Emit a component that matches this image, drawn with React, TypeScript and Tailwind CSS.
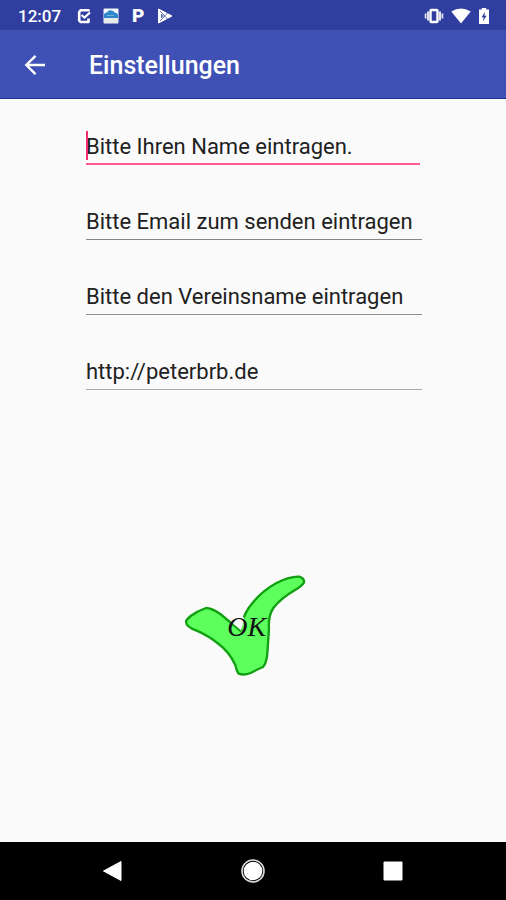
import { useState } from 'react'

const fields = [
  { id: 'name', label: 'Name', value: 'Bitte Ihren Name eintragen.', line: 'border-b-2 border-[#ff5c8d] mr-[2px]' },
  { id: 'email', label: 'Email', value: 'Bitte Email zum senden eintragen', line: 'border-b border-[#858585]' },
  { id: 'verein', label: 'Vereinsname', value: 'Bitte den Vereinsname eintragen', line: 'border-b border-[#8f8f8f]' },
  { id: 'url', label: 'Webseite', value: 'http://peterbrb.de', line: 'border-b border-[#a8a8a8]' },
]

function StatusBar() {
  return (
    <div className="h-[30px] bg-[#303f9f] flex items-center justify-between pt-[2px] pl-[18px] pr-4 text-white">
      <div className="flex items-center">
        <span className="text-[17px] font-medium leading-none">12:07</span>
        <div className="flex items-center gap-[11px] ml-[15px]">
          {/* Task */}
          <svg className="w-4 h-4" viewBox="0 0 16 16" fill="none" stroke="#fff" strokeWidth="2.6">
            <path d="M12.5 3.5V2.2H4.8L3.2 4V12.5L4.5 14H12.5V10.5" strokeLinejoin="round" />
            <path d="M5.5 7L8.5 9.5L14 4.5" strokeWidth="2.2" />
          </svg>
          {/* Cloud picture */}
          <svg className="w-4 h-4" viewBox="0 0 16 16">
            <rect x="0.5" y="0.5" width="15" height="15" rx="1" fill="#f4f8fb" />
            <path d="M1 10V6.5Q1.5 4.5 4 4.5Q5.5 1.8 8.5 2.5Q11 3 11.5 4.5Q15 5 15 7.5V10Z" fill="#2d86c9" />
            <path d="M4 7.5H11" stroke="#6db6e0" />
            <rect x="1" y="10" width="14" height="5" fill="#e8eaea" />
          </svg>
          <span className="w-4 text-center text-[19px] leading-6 font-black">P</span>
          {/* Play */}
          <svg className="w-4 h-4" viewBox="0 0 16 16">
            <path d="M1.5 1L15 8L1.5 15Z" fill="#fff" stroke="#fff" strokeLinejoin="round" />
            <path d="M3 3L10.5 11M3 13L10.5 5" stroke="#303f9f" strokeWidth="0.7" />
            <path d="M4 5.5L7 8L4 10.5Z" fill="#6874b9" />
          </svg>
        </div>
      </div>
      <div className="flex items-center gap-[7px]">
        {/* Vibrate */}
        <svg className="w-5 h-4" viewBox="0 0 20 16" fill="none" stroke="#fff">
          <rect x="6.5" y="2" width="7" height="12" rx="0.8" strokeWidth="2.4" />
          <path d="M4 3.5V12.5M16 3.5V12.5" stroke="#dfe2f2" strokeWidth="2" />
          <path d="M1.6 5.5V10.5M18.4 5.5V10.5" stroke="#dfe2f2" strokeWidth="1.8" />
        </svg>
        {/* Wifi */}
        <svg className="w-5 h-4" viewBox="0 0 20 16">
          <path d="M0.3 3.5Q10 -2.5 19.7 3.5L10 15.5Z" fill="#fff" />
        </svg>
        {/* Battery */}
        <svg className="w-3 h-4" viewBox="0 0 12 16">
          <path d="M3.8 0H8.2V1.5H11V16H1V1.5H3.8Z" fill="#fff" />
          <path d="M7 4L3.5 9.3H5.6L5 13.2L8.6 7.8H6.5Z" fill="#303f9f" />
        </svg>
      </div>
    </div>
  )
}

function App() {
  const [values, setValues] = useState(fields.map((f) => f.value))

  const update = (index: number, value: string) => {
    setValues(values.map((v, i) => (i === index ? value : v)))
  }

  return (
    <div className="min-h-screen flex flex-col bg-[#fafafa] font-['Roboto',sans-serif]">
      <StatusBar />

      {/* App bar */}
      <header className="h-[69px] bg-[#3f51b5] border-b border-[#1d2f95] flex items-center pt-[2px] pl-[23px] text-white">
        <button type="button" aria-label="Zurück" className="w-6 h-6">
          <svg className="w-6 h-6" viewBox="0 0 24 24" fill="none" stroke="#fff" strokeWidth="2.4">
            <path d="M22 12H3.5M12.5 2.8L3.3 12L12.5 21.2" />
          </svg>
        </button>
        <h1 className="ml-[42px] mt-[2px] text-[25px] leading-8 font-medium">Einstellungen</h1>
      </header>

      <form className="flex-1 flex flex-col pt-[28px] pl-[86px] pr-[84px]" onSubmit={(e) => e.preventDefault()}>
        <div className="flex flex-col gap-[37px]">
          {fields.map((field, i) => (
            <div key={field.id} className={`relative h-[38px] ${field.line}`}>
              <input
                id={field.id}
                type="text"
                aria-label={field.label}
                value={values[i]}
                onChange={(e) => update(i, e.target.value)}
                className="block w-full h-full pt-[2px] bg-transparent outline-none text-[22px] text-[#212121]"
              />
              {i === 0 && <span className="absolute left-0 top-1 w-[2px] h-[29px] bg-[#f0306c]" />}
            </div>
          ))}
        </div>

        <button type="submit" aria-label="OK" className="self-center mt-[170px] mr-[2px]">
          <svg className="w-[150px] h-[130px]" viewBox="24 0 450 390">
            <path
              d="M48 185Q50 178 62 168Q82 153 108 144Q125 144 151 162Q180 186 211 212Q214 178 236 144Q268 98 318 70Q356 49 388 50Q404 56 402 68Q396 78 374 91Q334 114 310 144Q294 168 297 206Q295 238 292 280Q290 308 279 321Q262 328 242 339Q222 347 206 341Q199 332 196 315Q178 276 146 252Q115 227 80 212Q48 200 48 185Z"
              fill="#5cff5c"
              stroke="#12a012"
              strokeWidth="7"
              strokeLinejoin="round"
            />
            <path d="M188 190Q194 170 207 166Q222 166 223 180L213 211Z" fill="#fafafa" />
            <text x="172" y="229" fontSize="84" fontStyle="italic" fontFamily="Liberation Serif, serif" fill="#111">
              OK
            </text>
          </svg>
        </button>
      </form>

      {/* Navigation bar */}
      <nav className="h-[58px] bg-black grid grid-cols-3 px-[43px]">
        <button type="button" aria-label="Zurück" className="flex items-center justify-center">
          <svg className="w-6 h-6" viewBox="0 0 24 24">
            <path d="M20 2.5V21.5L2.5 12Z" fill="#fff" stroke="#fff" strokeLinejoin="round" />
          </svg>
        </button>
        <button type="button" aria-label="Startseite" className="flex items-center justify-center">
          <svg className="w-6 h-6" viewBox="0 0 24 24">
            <circle cx="12" cy="12" r="11" fill="none" stroke="#ddd" strokeWidth="1.6" />
            <circle cx="12" cy="12" r="9.3" fill="#fff" />
          </svg>
        </button>
        <button type="button" aria-label="Übersicht" className="flex items-center justify-center">
          <svg className="w-6 h-6" viewBox="0 0 24 24">
            <rect x="2.5" y="2.5" width="19" height="19" rx="1" fill="#fff" />
          </svg>
        </button>
      </nav>
    </div>
  )
}

export default App
